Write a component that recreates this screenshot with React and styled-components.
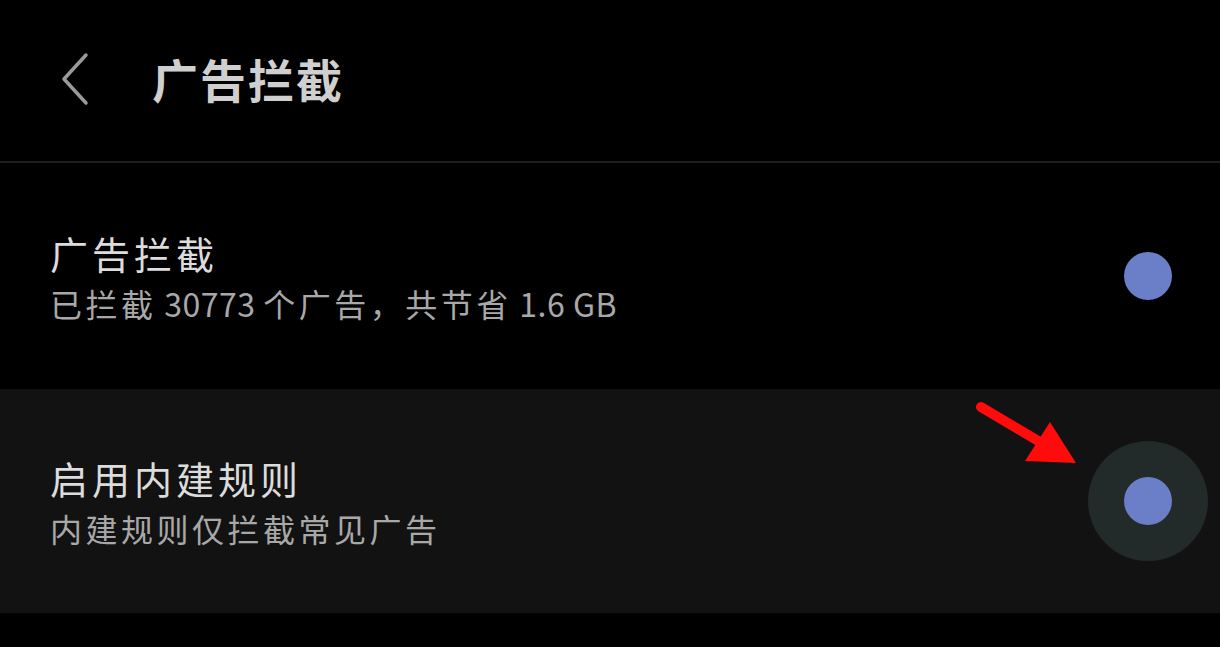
import styled, { createGlobalStyle } from 'styled-components';

const GlobalStyle = createGlobalStyle`
  html, body {
    margin: 0;
    padding: 0;
    background: #000;
  }
  body {
    font-family: "Noto Sans CJK SC", "Noto Sans", sans-serif;
  }
`;

const Screen = styled.div`
  position: relative;
  width: 1220px;
  height: 647px;
  background: #000;
  overflow: hidden;
`;

const Header = styled.div`
  display: flex;
  align-items: center;
  box-sizing: border-box;
  height: 163px;
  padding-left: 58px;
  border-bottom: 2px solid #1e1e1e;
`;

const BackButton = styled.div`
  display: flex;
  width: 34px;
  height: 56px;
  margin-right: 60px;
  margin-top: -4px;
`;

const Title = styled.h1`
  margin: 0;
  margin-top: -6px;
  font-size: 46px;
  font-weight: 700;
  color: #cfcfcf;
  letter-spacing: 2px;
`;

const Row = styled.div`
  display: flex;
  align-items: center;
  justify-content: space-between;
  height: ${(p) => p.$height}px;
  padding: 0 12px 0 50px;
  background: ${(p) => (p.$active ? '#121212' : '#000')};
`;

const TextBlock = styled.div`
  display: flex;
  flex-direction: column;
  gap: 4px;
`;

const RowTitle = styled.div`
  font-size: 38px;
  line-height: 50px;
  color: #dcdcdc;
  letter-spacing: 4px;
`;

const RowSub = styled.div`
  font-size: 32px;
  line-height: 42px;
  color: #a8a8a8;
  letter-spacing: 3.5px;
`;

const Latin = styled.span`
  letter-spacing: 0.5px;
`;

const Toggle = styled.div`
  display: flex;
  align-items: center;
  justify-content: center;
  width: 120px;
  height: 120px;
  border-radius: 50%;
  background: ${(p) => (p.$focused ? '#232a2a' : 'transparent')};
`;

const Knob = styled.div`
  width: 48px;
  height: 48px;
  border-radius: 50%;
  background: #6a7fc7;
`;

const Arrow = styled.svg`
  position: absolute;
  left: 970px;
  top: 395px;
`;

const App = () => {
  return (
    <Screen>
      <GlobalStyle />
      <Header>
        <BackButton>
          <svg width="34" height="56" viewBox="0 0 34 56">
            <path
              d="M28 4 L6 28 L28 52"
              fill="none"
              stroke="#9a9a9a"
              strokeWidth="3.5"
              strokeLinecap="round"
              strokeLinejoin="round"
            />
          </svg>
        </BackButton>
        <Title>广告拦截</Title>
      </Header>
      <Row $height={226}>
        <TextBlock>
          <RowTitle>广告拦截</RowTitle>
          <RowSub>
            已拦截<Latin> 30773 </Latin>个广告，共节省<Latin> 1.6 GB</Latin>
          </RowSub>
        </TextBlock>
        <Toggle>
          <Knob />
        </Toggle>
      </Row>
      <Row $height={224} $active>
        <TextBlock>
          <RowTitle>启用内建规则</RowTitle>
          <RowSub>内建规则仅拦截常见广告</RowSub>
        </TextBlock>
        <Toggle $focused>
          <Knob />
        </Toggle>
      </Row>
      <Arrow width="120" height="80" viewBox="0 0 120 80">
        <line x1="11" y1="12" x2="70" y2="47" stroke="#ff0b0b" strokeWidth="10" strokeLinecap="round" />
        <polygon points="80,27 55,66 106,68" fill="#ff0b0b" />
      </Arrow>
    </Screen>
  );
};

export default App;
